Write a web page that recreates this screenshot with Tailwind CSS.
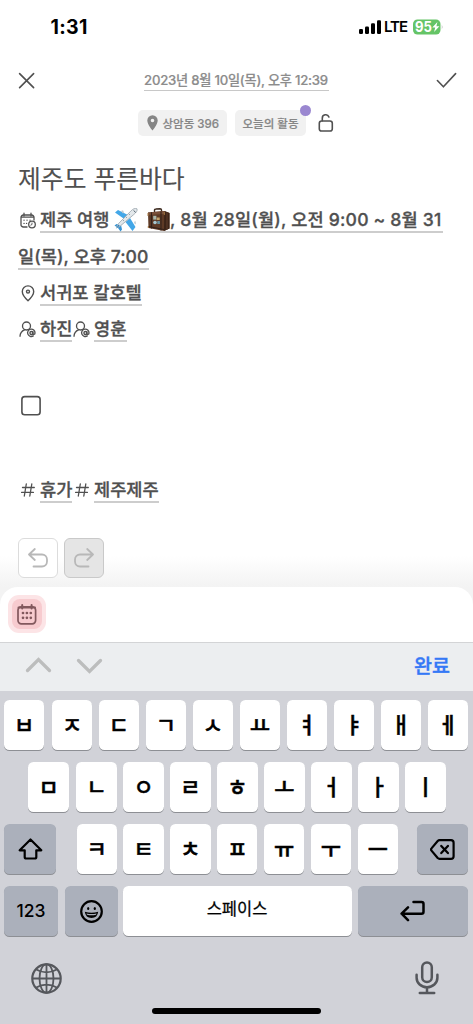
<!DOCTYPE html>
<html lang="ko">
<head>
<meta charset="utf-8">
<meta name="viewport" content="width=device-width, initial-scale=1">
<title>일기 편집</title>
<script src="https://cdn.jsdelivr.net/npm/@tailwindcss/browser@4"></script>
</head>
<body class="w-[473px] h-[1024px] overflow-hidden bg-white font-[Inter,'Noto_Sans_CJK_KR',sans-serif] text-[#505050]">
<div class="flex flex-col h-[1024px] w-[473px] overflow-hidden whitespace-nowrap">

  <!-- status bar -->
  <header class="h-[54px] flex items-center justify-between pl-[50.5px] pr-[29px] text-black shrink-0">
    <span class="text-[19.5px] font-bold leading-[54px] tracking-[0.3px]">1:31</span>
    <div class="flex items-center">
      <svg class="w-[22px] h-[15px]" viewBox="0 0 22 15"><rect x="0" y="9" width="4" height="5" rx="1.2"/><rect x="6" y="6.5" width="4" height="7.5" rx="1.2"/><rect x="12" y="3.3" width="4" height="10.7" rx="1.2"/><rect x="18" y="0.3" width="4" height="13.7" rx="1.2"/></svg>
      <span class="ml-[3px] text-[15px] font-semibold tracking-[-1px] w-[25px]">LTE</span>
      <svg class="ml-[4px] w-[31px] h-[16px]" viewBox="0 0 31 16"><rect x="0" y="0.5" width="27.5" height="15" rx="4.5" fill="#65c466"/><path d="M28.8 5.5q1.6 2.5 0 5z" fill="#b5b5b5"/><text x="2" y="13.200" font-size="14.200" font-weight="700" fill="#fff" textLength="17" lengthAdjust="spacingAndGlyphs">95</text><path d="M24.4 3L19.3 8.6h2.9L21.1 13l5.3-5.8h-3z" fill="#fff"/></svg>
    </div>
  </header>

  <!-- title bar -->
  <div class="h-[48px] flex items-center pl-[18px] pr-[16px] pt-[5px] shrink-0">
    <svg class="w-[17px] h-[17px]" viewBox="0 0 17 17" fill="none" stroke="#505050" stroke-width="1.6" stroke-linecap="round"><path d="M1.6 1.6l14 14M15.6 1.6l-14 14"/></svg>
    <div class="border-b border-[#c8c8c8] text-[13.2px] font-medium text-[#8c8c8c] leading-[19px] w-[185px] ml-[109px]"><span class="tracking-[-0.24px] [-webkit-text-stroke:0.2px_#8c8c8c]">2023년 8월 10일(목), 오후 12:39</span></div>
    <svg class="ml-auto w-[21px] h-[17px]" viewBox="0 0 21 17" fill="none" stroke="#505050" stroke-width="1.6" stroke-linecap="round" stroke-linejoin="round"><path d="M1.4 8.5l6 6.3L19.6 1.6"/></svg>
  </div>

  <div class="h-[42px] flex pl-[138px] pt-[8px] text-[11.5px] font-medium text-[#868686] shrink-0 [-webkit-text-stroke:0.2px_#868686]">
    <div class="w-[89px] h-[26px] rounded-[5px] bg-[#f1f1f1] flex items-center pl-[9px]">
      <svg class="w-[11px] h-[16px] mr-[4.500px]" viewBox="0 0 11 16"><path fill="#858585" fill-rule="evenodd" d="M5.5.3A5.2 5.2 0 0 0 .3 5.5C.3 9.4 5.5 15.6 5.5 15.6s5.2-6.2 5.2-10.1A5.2 5.2 0 0 0 5.5.3zm0 7A1.8 1.8 0 1 1 5.500 3.700a1.8 1.8 0 0 1 0 3.600z"/></svg>
      <span class="pt-[3px]">상암동 396</span>
    </div>
    <div class="relative ml-[8px] w-[71px] h-[26px] rounded-[5px] bg-[#f1f1f1] flex items-center justify-center">
      <span class="pt-[3px]">오늘의 활동</span>
      <i class="absolute right-[-5px] top-[-5px] w-[11px] h-[11px] rounded-full bg-[#9a87d0]"></i>
    </div>
    <svg class="ml-[12px] mt-[3px] w-[16px] h-[20px]" viewBox="0 0 16 20" fill="none" stroke="#505050" stroke-width="1.600" stroke-linecap="round"><rect x="1.300" y="8" width="13" height="10" rx="2.300"/><path d="M4.300 7.800V5.200a3.400 3.400 0 0 1 6.600-1.200"/></svg>
  </div>

  <!-- note -->
  <main class="pl-[18px] h-[443px] flex flex-col shrink-0 text-[17.6px] font-medium leading-[23px] bg-linear-to-b from-white from-93% to-[#f3f3f3]">
    <h1 class="text-[24.8px] font-normal leading-[52px] h-[52px] mt-[9px] mb-[-1px] [-webkit-text-stroke:0.1px_#505050]">제주도 푸른바다</h1>
    <div class="h-[29px] flex items-end [-webkit-text-stroke:0.3px_#505050]">
      <svg class="w-[16px] h-[17px] ml-[2px] mr-[4px] mb-[4px]" viewBox="0 0 16 17" fill="none" stroke="#505050" stroke-width="1.3" stroke-linecap="round"><path d="M7 15H3.300A2.300 2.300 0 0 1 1 12.700V5.300A2.300 2.300 0 0 1 3.300 3h8.400A2.300 2.300 0 0 1 14 5.300V8M4 1.200v2.600M11 1.200v2.600M1.200 5.200h12.600M4 8.200h.1M7 8.200h.1M10 8.200h.1M4 11.400h.1M6.500 11.400h.1"/><circle cx="12" cy="12.500" r="3.300"/><path d="M12 11v1.500l-1.200.6" stroke-width=".9"/></svg>
      <div class="border-b-2 border-[#cdcdcd] w-[403px] flex h-[25px]">
        <span class="w-[73px]">제주 여행</span>
        <svg class="w-[25px] h-[24px]" viewBox="0 0 25 24"><path d="M2 4.500L5 2l11 5.500-4 4zM17 10l5.500 9-3 4-7-9z" fill="#43a7e8"/><path d="M1.500 17.500l2-1.500 4.500 1 1 4.500-1.500 2-2.500-3.500z" fill="#3894d4"/><path d="M24 .8c-2.200-1-4.200.2-6.200 2.300L5.400 15.700c-1.200 1.400-1.800 2.700-1.500 3.500.9.500 2.100-.1 3.500-1.300L20.800 6.500C23 4.500 24.700 3 24 .8z" fill="#e3e8eb" stroke="#98a3ab" stroke-width=".8"/><path d="M5.500 16.500l1.300 1.200-4 3z" fill="#2d80bd"/><path d="M20.600 2.500l2.100 1.900M16 6l.5.500M13 9l.5.500M10 12l.5.500" stroke="#51616c" stroke-width="1"/><path d="M8 3l2-.7 1 2.200-1 1zM21 14l1.400-1 .6 2.400-1 1z" fill="#bfc9d0"/></svg>
        <svg class="ml-[9px] w-[23px] h-[24px]" viewBox="0 0 23 24"><path d="M7.500 4V2.200Q7.500 1 9 1l4-.2q1.500 0 1.500 1.300V4" fill="none" stroke="#3d2a1f" stroke-width="1.400"/><path d="M1 4.500L17.500 3l5 2v15.500L17 23 1.500 20z" fill="#5d3a26"/><path d="M17.300 3l5.200 2v15.500L17 23z" fill="#3c2418"/><path d="M1 4.500L17.500 3v3L1 7z" fill="#79503a"/><path d="M4.500 4.300v16.200M14 3.500v19M1.200 18.500l15.800 3" stroke="#33211a" stroke-width="1.100"/><path d="M20 4.500v17" stroke="#6b4832" stroke-width=".8"/><rect x="6.200" y="7.800" width="3.200" height="3.800" fill="#a9b7ac"/><rect x="9.700" y="9.500" width="3" height="2.500" fill="#c3a36c"/><circle cx="8" cy="14.500" r="1.800" fill="#a6c6d0"/><rect x="10.300" y="13" width="2.600" height="3" fill="#6993a1"/><path d="M1 5v3M1.300 18v2M17.300 4v3" stroke="#a57843"/></svg>
        <span class="tracking-[0.18px]">, 8월 28일(월), 오전 9:00 ~ 8월 31</span>
      </div>
    </div>
    <div class="h-[36.5px] flex items-end [-webkit-text-stroke:0.3px_#505050]"><span class="border-b-2 border-[#cdcdcd] w-[131px] tracking-[0.050px]">일(목), 오후 7:00</span></div>
    <div class="h-[36.5px] flex items-end [-webkit-text-stroke:0.3px_#505050]">
      <svg class="ml-[3px] mr-[5px] mb-[4px] w-[14px] h-[17px]" viewBox="0 0 14 17" fill="none" stroke="#505050" stroke-width="1.400" stroke-linejoin="round"><path d="M7 15.700C4.500 13.500 1.300 9.800 1.300 6.600a5.700 5.700 0 0 1 11.400 0C12.700 9.800 9.500 13.500 7 15.700z"/><circle cx="7" cy="6.600" r="1.500"/></svg>
      <span class="border-b-2 border-[#cdcdcd] w-[102px]">서귀포 칼호텔</span>
    </div>
    <div class="h-[36px] flex items-end [-webkit-text-stroke:0.3px_#505050]">
      <svg class="ml-[1px] mr-[4px] mb-[4px] w-[17px] h-[17px]" viewBox="0 0 17 17" fill="none" stroke="#505050" stroke-width="1.350" stroke-linecap="round"><circle cx="7.500" cy="5" r="4"/><path d="M1 15.200c.2-3 2-5.300 4.500-6.300"/><circle cx="12.400" cy="12" r="1.500"/><path d="M13.900 10.600v1.800c0 1.500 2.100 1.300 2.100-.5a3.700 3.700 0 1 0-1.700 3"/></svg>
      <span class="border-b-2 border-[#cdcdcd] w-[32px]">하진</span>
      <svg class="ml-[1px] mr-[4px] mb-[4px] w-[17px] h-[17px]" viewBox="0 0 17 17" fill="none" stroke="#505050" stroke-width="1.350" stroke-linecap="round"><circle cx="7.500" cy="5" r="4"/><path d="M1 15.200c.2-3 2-5.300 4.500-6.300"/><circle cx="12.400" cy="12" r="1.500"/><path d="M13.900 10.600v1.800c0 1.500 2.100 1.300 2.100-.5a3.700 3.700 0 1 0-1.700 3"/></svg>
      <span class="border-b-2 border-[#cdcdcd] w-[33px]">영훈</span>
    </div>
    <svg class="mt-[53px] ml-[2px] w-[22px] h-[22px] shrink-0" viewBox="0 0 22 22" fill="none" stroke="#505050" stroke-width="1.600"><rect x="1.900" y="1.600" width="18.200" height="18.200" rx="2.800"/></svg>
    <div class="mt-[60px] h-[26px] flex items-end shrink-0 [-webkit-text-stroke:0.3px_#505050]">
      <svg class="ml-[3px] mr-[5px] mb-[6px] w-[14px] h-[14px]" viewBox="0 0 14 14" fill="none" stroke="#505050" stroke-width="1.300" stroke-linecap="round"><path d="M1.500 4.500h11.800M.6 9.400h11.800M5.300 1L3.300 13M10.800 1l-2 12"/></svg>
      <span class="border-b-2 border-[#cdcdcd] w-[32px]">휴가</span>
      <svg class="ml-[3px] mr-[5px] mb-[6px] w-[14px] h-[14px]" viewBox="0 0 14 14" fill="none" stroke="#505050" stroke-width="1.300" stroke-linecap="round"><path d="M1.500 4.500h11.800M.6 9.400h11.800M5.300 1L3.300 13M10.800 1l-2 12"/></svg>
      <span class="border-b-2 border-[#cdcdcd] w-[65px]">제주제주</span>
    </div>
    <div class="mt-[35px] flex gap-[6px] shrink-0">
      <div class="w-[40px] h-[40px] rounded-[6px] border border-[#dcdcdc] bg-white flex items-center justify-center">
        <svg class="w-[20px] h-[20px]" viewBox="0 0 20 20" fill="none" stroke="#b8b8b8" stroke-width="1.800" stroke-linecap="round" stroke-linejoin="round"><path d="M6.800 1L1 6.500l5.800 5.500M1 6.500h13a5 5 0 0 1 5 5v2a5 5 0 0 1-5 5H5.500"/></svg>
      </div>
      <div class="w-[40px] h-[40px] rounded-[6px] border border-[#c9c9c9] bg-[#e5e5e5] flex items-center justify-center">
        <svg class="w-[20px] h-[20px]" viewBox="0 0 20 20" fill="none" stroke="#b8b8b8" stroke-width="1.800" stroke-linecap="round" stroke-linejoin="round"><path d="M13.200 1L19 6.500l-5.800 5.500M19 6.500H6a5 5 0 0 0-5 5v2a5 5 0 0 0 5 5h8.500"/></svg>
      </div>
    </div>
  </main>

  <!-- tool sheet -->
  <section class="h-[55px] bg-[#f3f3f3] shrink-0">
    <div class="h-[55px] bg-white rounded-t-[18px] flex pl-[8px] pt-[8px]">
      <div class="w-[38px] h-[38px] rounded-[11px] bg-[#fce4e6] flex items-center justify-center">
        <div class="w-[30px] h-[30px] rounded-[8px] bg-[#f7cbcf] flex items-center justify-center">
          <svg class="w-[20px] h-[21px]" viewBox="0 0 20 21" fill="none" stroke="#82585d" stroke-width="1.700" stroke-linecap="round"><rect x="1" y="2.800" width="17.600" height="17" rx="3.300"/><path d="M1.500 3.500h16.500" stroke-width="2"/><path d="M5.200 1v3.500M14.600 1v3.500" stroke-width="2"/><path d="M6 9h.01M9.900 9h.01M13.800 9h.01M6 13.800h.01M9.900 13.800h.01M13.800 13.800h.01" stroke-width="2.700"/></svg>
        </div>
      </div>
    </div>
  </section>

  <!-- keyboard accessory -->
  <div class="h-[49px] bg-[#eceef0] border-t border-[#d3d4d6] flex items-center pl-[25px] pr-[23px] shrink-0">
    <svg class="mb-[4px] w-[27px] h-[16px]" viewBox="0 0 27 16" fill="none" stroke="#bcbdbd" stroke-width="3.300" stroke-linecap="round"><path d="M2.500 13.500l11-11 11 11"/></svg>
    <svg class="ml-[24px] mb-[2px] w-[27px] h-[16px]" viewBox="0 0 27 16" fill="none" stroke="#bcbdbd" stroke-width="3.300" stroke-linecap="round"><path d="M2.500 2.500l11 11 11-11"/></svg>
    <span class="ml-auto text-[19.500px] font-medium text-[#3478f6] [-webkit-text-stroke:0.4px_#3478f6]">완료</span>
  </div>

  <!-- keyboard -->
  <section class="h-[333px] bg-[#d1d2d8] flex flex-col pt-[9px] pl-[4px] pr-[5px] text-black text-[22px] font-semibold shrink-0">
    <div class="flex flex-col gap-[12px]">
      <div class="flex gap-[6.500px] h-[50px] leading-[50px] text-center *:flex-1 *:rounded-[5.500px] *:bg-white *:shadow-[0_1px_0_#8d8f94] *:font-medium *:first:mr-[0.800px] [-webkit-text-stroke:0.500px_#000]">
        <b>ㅂ</b><b>ㅈ</b><b>ㄷ</b><b>ㄱ</b><b>ㅅ</b><b>ㅛ</b><b>ㅕ</b><b>ㅑ</b><b>ㅐ</b><b>ㅔ</b>
      </div>
      <div class="flex gap-[6.500px] h-[50px] leading-[50px] text-center pl-[24.300px] pr-[22.300px] *:flex-1 *:rounded-[5.500px] *:bg-white *:shadow-[0_1px_0_#8d8f94] *:font-medium *:first:mr-[1px] [-webkit-text-stroke:0.500px_#000]">
        <b>ㅁ</b><b>ㄴ</b><b>ㅇ</b><b>ㄹ</b><b>ㅎ</b><b>ㅗ</b><b>ㅓ</b><b>ㅏ</b><b>ㅣ</b>
      </div>
      <div class="flex h-[50px]">
        <div class="w-[52px] rounded-[5.500px] bg-[#abb0bb] shadow-[0_1px_0_#8d8f94] flex items-center justify-center">
          <svg class="w-[25px] h-[22px]" viewBox="0 0 25 22" fill="none" stroke="#000" stroke-width="2.200" stroke-linejoin="round"><path d="M12.500 1.500L1.700 12.300h5V19q0 1.500 1.500 1.500h8.600q1.500 0 1.500-1.500v-6.700h5z"/></svg>
        </div>
        <div class="ml-[20.500px] w-[321.500px] flex gap-[6.500px] leading-[50px] text-center *:flex-1 *:rounded-[5.500px] *:bg-white *:shadow-[0_1px_0_#8d8f94] *:font-medium [-webkit-text-stroke:0.500px_#000]">
          <b>ㅋ</b><b>ㅌ</b><b>ㅊ</b><b>ㅍ</b><b>ㅠ</b><b>ㅜ</b><b>ㅡ</b>
        </div>
        <div class="ml-auto w-[51.500px] rounded-[5.500px] bg-[#abb0bb] shadow-[0_1px_0_#8d8f94] flex items-center justify-center">
          <svg class="w-[25px] h-[21px]" viewBox="0 0 25 21" fill="none" stroke="#000" stroke-width="2.200" stroke-linejoin="round" stroke-linecap="round"><path d="M9.500 1.200H21q2.600 0 2.600 2.600v13.400q0 2.600-2.600 2.600H9.500q-1 0-1.800-.8L1.500 11.600q-1-1.100 0-2.200L7.700 2q.8-.8 1.800-.8zM11.300 6.900l6.600 7.200M17.900 6.900l-6.600 7.200"/></svg>
        </div>
      </div>
      <div class="flex h-[50px]">
        <div class="w-[54px] rounded-[5.500px] bg-[#abb0bb] shadow-[0_1px_0_#8d8f94] text-center text-[17.500px] font-medium leading-[50px]">123</div>
        <div class="ml-[6.500px] w-[53px] rounded-[5.500px] bg-[#abb0bb] shadow-[0_1px_0_#8d8f94] flex items-center justify-center">
          <svg class="w-[23px] h-[23px]" viewBox="0 0 23 23"><circle cx="11.500" cy="11.500" r="10.300" fill="none" stroke="#000" stroke-width="2.200"/><ellipse cx="8.200" cy="8.500" rx="1.100" ry="1.600"/><ellipse cx="14.800" cy="8.500" rx="1.100" ry="1.600"/><path d="M4.800 11.800q6.700 2 13.400 0-.8 6.200-6.700 6.200t-6.700-6.200z"/><path d="M6.400 13.400q5.100 1.200 10.200 0l-.6 1.300q-4.500 1-9 0z" fill="#abb0bb"/></svg>
        </div>
        <div class="ml-[5px] w-[229px] rounded-[5.500px] bg-white shadow-[0_1px_0_#8d8f94] text-center text-[16.500px] font-normal leading-[47px] [-webkit-text-stroke:0.250px_#000]">스페이스</div>
        <div class="ml-auto w-[110.500px] rounded-[5.500px] bg-[#abb0bb] shadow-[0_1px_0_#8d8f94] flex items-center justify-center">
          <svg class="w-[25px] h-[22px]" viewBox="0 0 25 22" fill="none" stroke="#000" stroke-width="2.500" stroke-linecap="round" stroke-linejoin="round"><path d="M13.500 2h8q2 0 2 2v7.700q0 2-2 2H1.800M8 7.300l-6.400 6.400L8 20.200"/></svg>
        </div>
      </div>
    </div>
    <div class="flex justify-between items-center pl-[27px] pr-[29px] mt-[25px]">
      <svg class="w-[31px] h-[31px]" viewBox="0 0 31 31" fill="none" stroke="#55575c" stroke-width="1.800"><circle cx="15.500" cy="15.500" r="14.200" stroke-width="2.200"/><ellipse cx="15.500" cy="15.500" rx="7" ry="14.300"/><path d="M15.500 1v29M1 15.500h29M4.700 6.300Q15.500 12.500 26.300 6.300M4.700 24.700Q15.500 18.500 26.300 24.700"/></svg>
      <svg class="w-[24px] h-[34px]" viewBox="0 0 24 34" fill="none" stroke="#55575c" stroke-width="2.500" stroke-linecap="round"><rect x="7.200" y="1.500" width="9.600" height="19.500" rx="4.800"/><path d="M1.600 13.800v3a10.400 9.500 0 0 0 20.800 0v-3M12 26.500V32M4.800 32h14.400"/></svg>
    </div>
    <div class="ml-[148px] mt-[13px] w-[169px] h-[5.500px] rounded-full bg-black shrink-0"></div>
  </section>
</div>
</body>
</html>
